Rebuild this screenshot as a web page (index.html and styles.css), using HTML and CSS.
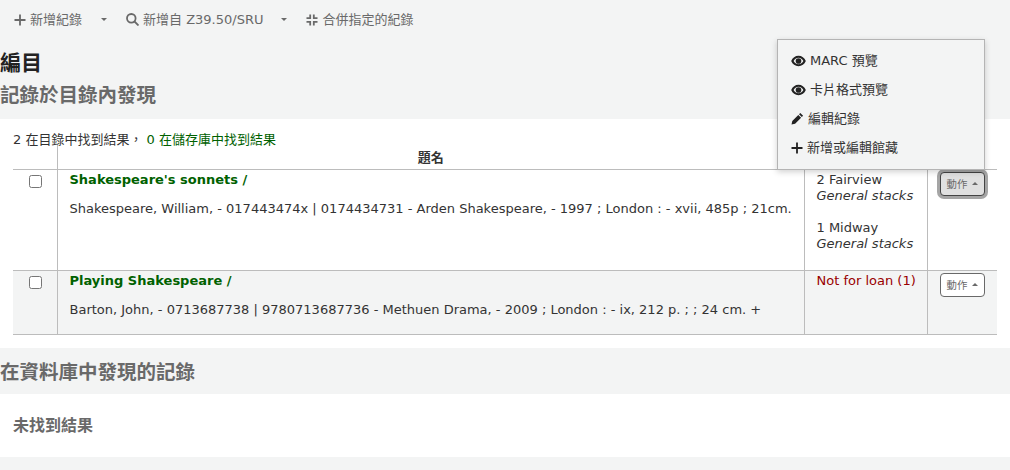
FILE: index.html
```html
<!DOCTYPE html>
<html lang="zh-Hant">
<head>
<meta charset="utf-8">
<title>編目</title>
<link rel="stylesheet" href="styles.css">
</head>
<body>
<div class="toolbar">
  <a class="tool tool-first"><svg class="ico ico-plus" viewBox="0 0 12 12"><path d="M6 .5v11M.5 6h11"/></svg>新增紀錄</a>
  <span class="caret caret-a"></span>
  <a class="tool tool-second"><svg class="ico ico-search" viewBox="0 0 13 13"><circle cx="5.300" cy="5.300" r="4.300"/><path d="M8.500 8.500l4 4"/></svg>新增自 Z39.50/SRU</a>
  <span class="caret caret-b"></span>
  <a class="tool"><svg class="ico ico-merge" viewBox="0 0 12 12"><path d="M4.200 .5v3.700H.5M7.800 .5v3.700h3.700M4.200 11.500V7.800H.5M7.800 11.500V7.800h3.700"/></svg>合併指定的紀錄</a>
</div>
<h1 class="page-title">編目</h1>
<h2 class="section-title first-title">記錄於目錄內發現</h2>
<section class="panel results">
  <p class="summary">2 在目錄中找到結果， <span class="green">0 在儲存庫中找到結果</span></p>
  <table class="grid">
    <colgroup><col class="c1"><col class="c2"><col class="c3"><col class="c4"></colgroup>
    <thead>
      <tr><th class="noline"></th><th class="title-head">題名</th><th></th><th></th></tr>
    </thead>
    <tbody>
      <tr class="r1">
        <td class="check"><span class="box"></span></td>
        <td class="rec"><a class="rec-title">Shakespeare's sonnets /</a><p class="meta">Shakespeare, William, - 017443474x | 0174434731 - Arden Shakespeare, - 1997 ; London : - xvii, 485p ; 21cm.</p></td>
        <td class="loc"><div>2 Fairview</div><em>General stacks</em><div class="loc-gap">1 Midway</div><em>General stacks</em></td>
        <td class="act"><button class="btn btn-open">動作<span class="up"></span></button></td>
      </tr>
      <tr class="r2">
        <td class="check"><span class="box"></span></td>
        <td class="rec"><a class="rec-title">Playing Shakespeare /</a><p class="meta">Barton, John, - 0713687738 | 9780713687736 - Methuen Drama, - 2009 ; London : - ix, 212 p. ; ; 24 cm. +</p></td>
        <td class="loc"><span class="red">Not for loan (1)</span></td>
        <td class="act"><button class="btn">動作<span class="up"></span></button></td>
      </tr>
    </tbody>
  </table>
</section>
<h2 class="section-title second-title">在資料庫中發現的記錄</h2>
<section class="panel empty"><h3>未找到結果</h3></section>
<div class="menu">
  <a class="menu-item"><svg class="mi eye" viewBox="0 0 16 12"><path fill-rule="evenodd" d="M8 .5C4.500.5 1.600 2.600.2 6c1.400 3.400 4.300 5.500 7.800 5.500s6.400-2.100 7.800-5.500C14.400 2.600 11.500.5 8 .5zM8 2.500C10.300 2.500 12.300 4 13.200 6c-.9 2-2.900 3.500-5.200 3.500S3.700 8 2.800 6C3.700 4 5.700 2.500 8 2.500z"/><circle cx="8" cy="6" r="3"/></svg>MARC 預覽</a>
  <a class="menu-item"><svg class="mi eye" viewBox="0 0 16 12"><path fill-rule="evenodd" d="M8 .5C4.500.5 1.600 2.600.2 6c1.400 3.400 4.300 5.500 7.800 5.500s6.400-2.100 7.800-5.500C14.400 2.600 11.500.5 8 .5zM8 2.500C10.300 2.500 12.300 4 13.200 6c-.9 2-2.900 3.500-5.200 3.500S3.700 8 2.800 6C3.700 4 5.700 2.500 8 2.500z"/><circle cx="8" cy="6" r="3"/></svg>卡片格式預覽</a>
  <a class="menu-item"><svg class="mi pen" viewBox="0 0 13 13"><path d="M9.300.9l2.800 2.800-1.300 1.300L8 2.200zM7.300 2.900l2.800 2.800-6 6-3.600.8.800-3.600z"/></svg>編輯紀錄</a>
  <a class="menu-item"><svg class="mi plus" viewBox="0 0 12 12"><path d="M6 .5v11M.5 6h11"/></svg>新增或編輯館藏</a>
</div>
</body>
</html>
```
FILE: styles.css
```css
html, body { margin: 0; padding: 0; }
body {
  position: relative;
  height: 470px;
  overflow: hidden;
  background: #f3f4f4;
  color: #333;
  font: 13px/17px "DejaVu Sans", "Noto Sans CJK TC", sans-serif;
}
.toolbar {
  display: flex;
  align-items: center;
  height: 39px;
  padding-left: 14px;
  color: #696969;
}
.tool { display: flex; align-items: center; }
.ico { width: 12px; height: 12px; margin-right: 4px; fill: none; stroke: #696969; stroke-width: 1.800; }
.ico-search { width: 13px; height: 13px; margin-right: 4px; stroke-width: 1.800; }
.ico-merge { width: 12px; height: 12px; margin-right: 4px; margin-left: 1px; stroke-width: 1.800; }
.caret { width: 0; height: 0; border: 3px solid transparent; border-top-color: #696969; border-bottom: 0; }
.caret-a { margin: 0 19px 0 19px; }
.caret-b { margin: 0 18px 0 18px; }
.page-title { margin: 11px 0 0; font-size: 21px; line-height: 26px; font-weight: 700; color: #222; }
.section-title { margin: 0; font-size: 19.500px; font-weight: 700; color: #696969; line-height: 26px; }
.first-title { margin-top: 7px; height: 36px; }
.second-title { height: 46px; line-height: 50px; }
.panel { background: #fff; }
.results { height: 229px; padding: 0 13px; box-sizing: border-box; }
.summary { margin: 0; padding-top: 12px; height: 26px; box-sizing: border-box; line-height: 17px; }
.green { color: #006100; }
.grid { width: 984px; border-collapse: collapse; table-layout: fixed; line-height: 16px; }
.c1 { width: 44px; }
.c2 { width: 747px; }
.c3 { width: 123px; }
.c4 { width: 70px; }
.grid th, .grid td { padding: 0; vertical-align: top; text-align: left; }
.grid thead tr { height: 24px; border-bottom: 1px solid #bcbcbc; }
.noline { border-right: 1px solid #bcbcbc; }
.grid .title-head { text-align: center; font-size: 13px; color: #333; padding-top: 5px; }
.r1 { height: 101px; border-bottom: 1px solid #bcbcbc; }
.r2 { height: 64px; border-bottom: 1px solid #bcbcbc; background: #f3f4f4; }
.rec, .check { border-right: 1px solid #bcbcbc; }
.grid .loc { border-right: 1px solid #bcbcbc; padding: 2px 0 0 12px; }
.grid .check { text-align: center; }
.box {
  display: inline-block;
  box-sizing: border-box;
  width: 13px;
  height: 13px;
  margin: 5px 0 0 1px;
  background: #fff;
  border: 1px solid #767676;
  border-radius: 2.500px;
}
.grid .rec { padding: 2px 0 0 12px; }
.rec-title { display: block; font-weight: 700; color: #006100; }
.meta { margin: 13px 0 0; }
.loc em { display: block; }
.loc-gap { margin-top: 16px; }
.red { color: #990000; }
.grid .act { padding: 2px 0 0 12px; }
.btn {
  display: flex;
  align-items: center;
  box-sizing: border-box;
  width: 45px;
  height: 24px;
  padding: 0 0 0 6px;
  background: #fff;
  border: 1px solid #696969;
  border-radius: 4px;
  color: #696969;
  font: 10.400px/14px "DejaVu Sans", "Noto Sans CJK TC", sans-serif;
}
.btn-open { background: #e0e0e0; border-color: #444; box-shadow: 0 0 0 3px #a5a5a5; }
.up { width: 0; height: 0; margin-left: 5px; border: 3px solid transparent; border-bottom-color: #696969; border-top: 0; }
.empty { height: 63px; padding: 0 13px; box-sizing: border-box; }
.empty h3 { margin: 0; padding-top: 21px; font-size: 16px; line-height: 22px; font-weight: 700; color: #696969; }
.menu {
  position: absolute;
  left: 777px;
  top: 39px;
  box-sizing: border-box;
  width: 208px;
  height: 131px;
  padding: 6px 0;
  display: flex;
  flex-direction: column;
  background: #f3f4f4;
  border: 1px solid #b4b4b4;
  box-shadow: 0 2px 6px rgba(0,0,0,.18);
  color: #333;
}
.menu-item { display: flex; align-items: center; height: 29px; padding-left: 13px; }
.mi { margin-right: 4px; flex: none; }
.eye { width: 15px; height: 12px; fill: #222; }
.pen { width: 13px; height: 13px; fill: #222; margin-right: 4px; }
.plus { width: 12px; height: 12px; fill: none; stroke: #222; stroke-width: 1.800; margin-right: 4px; }
```
